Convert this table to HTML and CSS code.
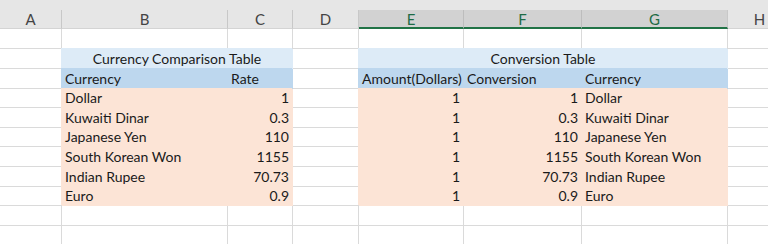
FILE: index.html
```html
<!DOCTYPE html>
<html lang="en">
	<head>
		<title>Currency Conversion</title>
		<meta charset="utf-8"/>
		<link rel="stylesheet" href="styles.css">
	</head>
	<body>

		<div class="topband"></div>

		<div class="sheet">
			<!-- column headers -->
			<div class="colhead">A</div>
			<div class="colhead">B</div>
			<div class="colhead">C</div>
			<div class="colhead">D</div>
			<div class="colhead selected">E</div>
			<div class="colhead selected">F</div>
			<div class="colhead selected last">G</div>
			<div class="colhead">H</div>

			<!-- row 1 -->
			<div class="cell"></div>
			<div class="cell"></div>
			<div class="cell"></div>
			<div class="cell"></div>
			<div class="cell"></div>
			<div class="cell"></div>
			<div class="cell"></div>
			<div class="cell"></div>

			<!-- row 2: titles -->
			<div class="cell"></div>
			<div class="cell title span2">Currency Comparison Table</div>
			<div class="cell"></div>
			<div class="cell title span3">Conversion Table</div>
			<div class="cell"></div>

			<!-- row 3: headings -->
			<div class="cell"></div>
			<div class="cell heading">Currency</div>
			<div class="cell heading">Rate</div>
			<div class="cell"></div>
			<div class="cell heading">Amount(Dollars)</div>
			<div class="cell heading">Conversion</div>
			<div class="cell heading">Currency</div>
			<div class="cell"></div>

			<!-- data rows -->
			<div class="cell"></div>
			<div class="cell data">Dollar</div>
			<div class="cell data num">1</div>
			<div class="cell"></div>
			<div class="cell data num">1</div>
			<div class="cell data num">1</div>
			<div class="cell data">Dollar</div>
			<div class="cell"></div>

			<div class="cell"></div>
			<div class="cell data">Kuwaiti Dinar</div>
			<div class="cell data num">0.3</div>
			<div class="cell"></div>
			<div class="cell data num">1</div>
			<div class="cell data num">0.3</div>
			<div class="cell data">Kuwaiti Dinar</div>
			<div class="cell"></div>

			<div class="cell"></div>
			<div class="cell data">Japanese Yen</div>
			<div class="cell data num">110</div>
			<div class="cell"></div>
			<div class="cell data num">1</div>
			<div class="cell data num">110</div>
			<div class="cell data">Japanese Yen</div>
			<div class="cell"></div>

			<div class="cell"></div>
			<div class="cell data">South Korean Won</div>
			<div class="cell data num">1155</div>
			<div class="cell"></div>
			<div class="cell data num">1</div>
			<div class="cell data num">1155</div>
			<div class="cell data">South Korean Won</div>
			<div class="cell"></div>

			<div class="cell"></div>
			<div class="cell data">Indian Rupee</div>
			<div class="cell data num">70.73</div>
			<div class="cell"></div>
			<div class="cell data num">1</div>
			<div class="cell data num">70.73</div>
			<div class="cell data">Indian Rupee</div>
			<div class="cell"></div>

			<div class="cell"></div>
			<div class="cell data">Euro</div>
			<div class="cell data num">0.9</div>
			<div class="cell"></div>
			<div class="cell data num">1</div>
			<div class="cell data num">0.9</div>
			<div class="cell data">Euro</div>
			<div class="cell"></div>

			<!-- empty rows -->
			<div class="cell"></div>
			<div class="cell"></div>
			<div class="cell"></div>
			<div class="cell"></div>
			<div class="cell"></div>
			<div class="cell"></div>
			<div class="cell"></div>
			<div class="cell"></div>

			<div class="cell"></div>
			<div class="cell"></div>
			<div class="cell"></div>
			<div class="cell"></div>
			<div class="cell"></div>
			<div class="cell"></div>
			<div class="cell"></div>
			<div class="cell"></div>
		</div>

	</body>
</html>
```

FILE: styles.css
```css
body, html {
	margin: 0px;
	background-color: #ffffff;
	overflow: hidden;
	font-family: Lato, 'Liberation Sans', sans-serif;
}

.topband {
	height: 10px;
	background-color: #e6e6e6;
}

.sheet {
	display: grid;
	grid-template-columns: 62px 166px 65px 66px 105px 118px 146px 64px;
	grid-template-rows: 19px 20px 20px 20px 19px 20px 19px 20px 20px 19px 20px 20px;
}

.colhead {
	box-sizing: border-box;
	background-color: #e6e6e6;
	border-right: 1px solid #c8c8c8;
	border-bottom: 1px solid #d4d4d4;
	color: #444444;
	font-size: 15px;
	line-height: 18px;
	text-align: center;
}
.colhead.selected {
	background-color: #d2d2d2;
	color: #1e6b45;
	border-bottom: 2px solid #217346;
	border-right-color: #bdbdbd;
}
.colhead.last {
	border-right-color: #c8c8c8;
}

.cell {
	box-sizing: border-box;
	border-right: 1px solid #dadada;
	border-bottom: 1px solid #dadada;
	padding: 0 3px 1px 3px;
	display: flex;
	align-items: flex-end;
	font-size: 14px;
	line-height: 17px;
	color: #1a1a1a;
	white-space: nowrap;
}

.span2 {
	grid-column: span 2;
}
.span3 {
	grid-column: span 3;
}

/* filled cells hide the gridlines round them, like Excel */
.title {
	justify-content: center;
	background-color: #ddebf7;
	border-color: #ddebf7;
	box-shadow: -1px -1px 0 #ddebf7;
}
.heading {
	background-color: #bdd7ee;
	border-color: #bdd7ee;
	box-shadow: -1px -1px 0 #bdd7ee;
}
.data {
	background-color: #fce4d6;
	border-color: #fce4d6;
	box-shadow: -1px -1px 0 #fce4d6;
}
.num {
	justify-content: flex-end;
}
```
